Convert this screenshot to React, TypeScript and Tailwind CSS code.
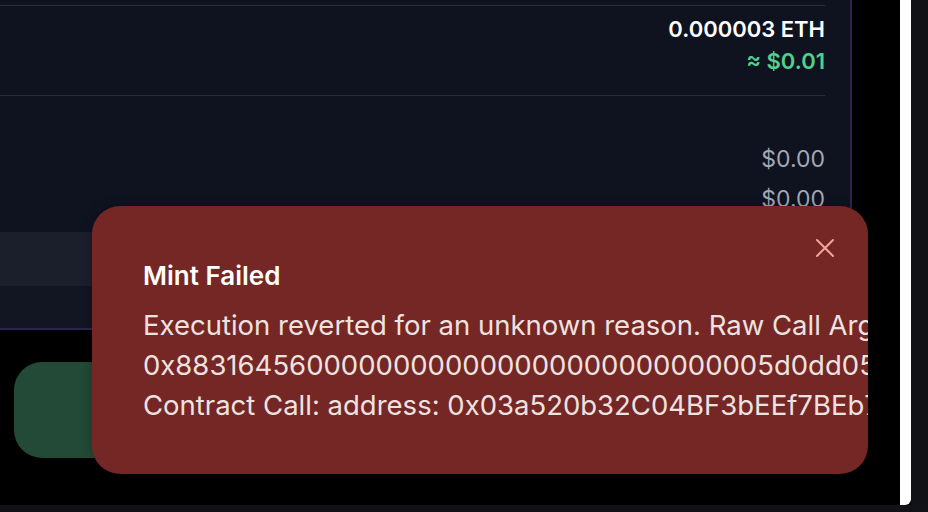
import { X } from 'lucide-react';

const sans = { fontFamily: 'Inter, "Noto Sans", sans-serif' };

const calldata = '0x88316456' + '0'.repeat(26) + '5d0dd05a4a2c7bfc3c4f1a8e1cbe8a0d';

function Toast() {
  return (
    <div
      className="absolute left-[92px] top-[206px] w-[776px] h-[268px] rounded-[28px] bg-[#742724] overflow-hidden shadow-[0_0_12px_rgba(0,0,0,0.25)]"
      style={sans}
    >
      <button className="absolute right-[27px] top-[26px] text-[#f3a3a0]">
        <X size={32} strokeWidth={1.5} />
      </button>
      <div className="pl-[51px] pt-[54px]">
        <h3 className="text-[26px] leading-[32px] font-semibold text-white">Mint Failed</h3>
        <div className="mt-[13px] text-[27.5px] leading-[40px] text-[#eee2e1] whitespace-pre">
          <p>Execution reverted for an unknown reason. Raw Call Arguments:</p>
          <p>{calldata}</p>
          <p>Contract Call: address: 0x03a520b32C04BF3bEEf7BEb72E919cf822Ed34f1</p>
        </div>
      </div>
    </div>
  );
}

export default function App() {
  return (
    <div className="relative w-[928px] h-[512px] bg-black overflow-hidden flex flex-col" style={sans}>
      <div className="flex flex-1">
        {/* page */}
        <div className="w-[900px] flex flex-col">
          <div className="w-[852px] h-[330px] bg-[#0f1320] border-r-2 border-b-2 border-[#2e2350] pt-[5px] flex flex-col">
            <div className="mr-[25px] border-t border-[#2a2f3b] pt-[9px] pb-[20px] flex flex-col items-end gap-[4px]">
              <span className="text-[22px] leading-[28px] font-semibold text-white">0.000003 ETH</span>
              <span className="text-[22px] leading-[28px] font-semibold text-[#4fd18b]">≈ $0.01</span>
            </div>
            <div className="mr-[25px] border-t border-[#2a2f3b] pt-[49px] flex flex-col items-end gap-[12px]">
              <span className="text-[23px] leading-[28px] text-[#a3a8b3]">$0.00</span>
              <span className="text-[23px] leading-[28px] text-[#a3a8b3]">$0.00</span>
            </div>
            <div className="mt-[19px] h-[54px] bg-[#1b1f2c]" />
            <div className="flex-1 bg-[#121522]" />
          </div>
          <div className="mt-[32px] ml-[14px] w-[824px] h-[96px] rounded-[28px] bg-[#234a36]" />
        </div>
        {/* scrollbar */}
        <div className="w-[11px] bg-white rounded-br-[6px]" />
        <div className="flex-1 bg-[#111216]" />
      </div>
      <div className="h-[7px] bg-[#121318]" />
      <Toast />
    </div>
  );
}
